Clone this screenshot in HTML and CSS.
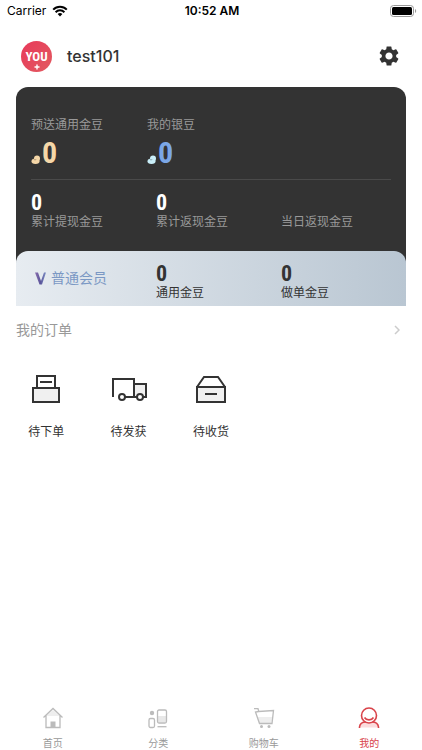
FILE: index.html
```html
<!DOCTYPE html>
<html lang="zh-CN">

<head>
    <meta charset="UTF-8">
    <meta name="viewport" content="width=device-width, initial-scale=1.0">
    <title>我的</title>
    <link rel="stylesheet" href="styles.css">
</head>

<body>
    <div class="status-bar">
        <div class="carrier">
            <span>Carrier</span>
            <svg width="16" height="12" viewBox="0 0 16 12" fill="none" stroke="#000" stroke-width="2">
                <path d="M1.2 4.6a9.6 9.6 0 0 1 13.6 0M3.6 7.2a6.2 6.2 0 0 1 8.8 0" />
                <path d="M5.6 9.1a3.4 3.4 0 0 1 4.8 0L8 11.5z" fill="#000" stroke="none" />
            </svg>
        </div>
        <span class="time">10:52 AM</span>
        <svg class="battery" width="27" height="12" viewBox="0 0 27 12">
            <rect x=".5" y=".5" width="23" height="11" rx="3" fill="#fff" stroke="#999" />
            <rect x="2" y="2" width="20" height="8" rx="1.5" fill="#000" />
            <path d="M25 4v4c1.6-.6 1.6-3.4 0-4z" fill="#999" />
        </svg>
    </div>

    <header class="profile">
        <div class="avatar">
            <span>YOU</span>
            <svg width="6" height="6" viewBox="0 0 6 6" stroke="#fff" stroke-width="1.4">
                <path d="M3 .5v5M.5 3h5" />
            </svg>
        </div>
        <h1>test101</h1>
        <button class="settings" aria-label="设置">
            <svg width="24" height="24" viewBox="0 0 24 24" fill="#333">
                <path d="M19.14 12.94c.04-.3.06-.61.06-.94s-.02-.64-.07-.94l2.03-1.58a.49.49 0 0 0 .12-.61l-1.92-3.32a.488.488 0 0 0-.59-.22l-2.39.96c-.5-.38-1.03-.7-1.62-.94l-.36-2.54a.484.484 0 0 0-.48-.41h-3.84c-.24 0-.43.17-.47.41l-.36 2.54c-.59.24-1.13.57-1.62.94l-2.39-.96c-.22-.08-.47 0-.59.22L2.74 8.87c-.12.21-.08.47.12.61l2.03 1.58c-.05.3-.09.63-.09.94s.02.64.07.94l-2.03 1.58a.49.49 0 0 0-.12.61l1.92 3.32c.12.22.37.29.59.22l2.39-.96c.5.38 1.03.7 1.62.94l.36 2.54c.05.24.24.41.48.41h3.84c.24 0 .44-.17.47-.41l.36-2.54c.59-.24 1.13-.56 1.62-.94l2.39.96c.22.08.47 0 .59-.22l1.92-3.32c.12-.22.07-.47-.12-.61l-2.01-1.58zM12 15.6c-1.98 0-3.6-1.62-3.6-3.6s1.62-3.6 3.6-3.6 3.6 1.62 3.6 3.6-1.62 3.6-3.6 3.6z" />
            </svg>
        </button>
    </header>

    <main>
        <section class="card">
            <div class="balances">
                <div class="balance gold">
                    <div class="label">预送通用金豆</div>
                    <div class="amount">
                        <svg width="10" height="10" viewBox="0 0 10 10">
                            <circle cx="6" cy="3.5" r="3" fill="#f5d7a8" />
                            <ellipse cx="4.5" cy="6.3" rx="4" ry="2.7" fill="#f5d7a8" />
                            <path d="M3 4.2c.4 1.200 1.600 1.200 2 0" fill="none" stroke="#8a7a60" stroke-width=".7" />
                        </svg>
                        <strong>0</strong>
                    </div>
                </div>
                <div class="balance silver">
                    <div class="label">我的银豆</div>
                    <div class="amount">
                        <svg width="10" height="10" viewBox="0 0 10 10">
                            <circle cx="6" cy="3.5" r="3" fill="#c9eef8" />
                            <ellipse cx="4.5" cy="6.3" rx="4" ry="2.7" fill="#c9eef8" />
                            <path d="M3 4.2c.4 1.200 1.600 1.200 2 0" fill="none" stroke="#66808a" stroke-width=".7" />
                        </svg>
                        <strong>0</strong>
                    </div>
                </div>
            </div>

            <div class="stats">
                <div class="stat">
                    <strong>0</strong>
                    <div class="label">累计提现金豆</div>
                </div>
                <div class="stat">
                    <strong>0</strong>
                    <div class="label">累计返现金豆</div>
                </div>
                <div class="stat">
                    <strong></strong>
                    <div class="label">当日返现金豆</div>
                </div>
            </div>

            <div class="member">
                <div class="level">
                    <svg width="12" height="13" viewBox="0 0 12 13">
                        <defs>
                            <linearGradient id="level" x1="0" y1="0" x2="1" y2="0">
                                <stop offset="0" stop-color="#8c6fae" />
                                <stop offset=".5" stop-color="#5a559b" />
                                <stop offset="1" stop-color="#7d8fc4" />
                            </linearGradient>
                        </defs>
                        <path d="M0 .5h3L6 9 9 .5h2L7 12.5H4.5z" fill="url(#level)" />
                    </svg>
                    <span>普通会员</span>
                </div>
                <div class="stat">
                    <strong>0</strong>
                    <div class="label">通用金豆</div>
                </div>
                <div class="stat">
                    <strong>0</strong>
                    <div class="label">做单金豆</div>
                </div>
            </div>
        </section>

        <section>
            <a href="#" class="orders-title">
                <span>我的订单</span>
                <svg width="6" height="10" viewBox="0 0 6 10" fill="none" stroke="#ccc" stroke-width="1.5">
                    <path d="M1 1l4 4-4 4" />
                </svg>
            </a>
            <div class="orders">
                <a href="#">
                    <svg width="40" height="32" viewBox="0 0 40 32" fill="none" stroke="#333" stroke-width="2">
                        <path d="M11 15V3h18v12" />
                        <path d="M14 9h12" />
                        <path d="M7 15h26v14H7z" fill="#f0f0f0" />
                    </svg>
                    <span>待下单</span>
                </a>
                <a href="#">
                    <svg width="40" height="32" viewBox="0 0 40 32" fill="none" stroke="#333" stroke-width="2">
                        <path d="M25 11h12v13H25z" fill="#f0f0f0" />
                        <path d="M4 24V6h21v18M12 24h20" />
                        <circle cx="13" cy="24" r="3" fill="#fff" />
                        <circle cx="31" cy="24" r="3" fill="#fff" />
                    </svg>
                    <span>待发获</span>
                </a>
                <a href="#">
                    <svg width="40" height="32" viewBox="0 0 40 32" fill="none" stroke="#333" stroke-width="2">
                        <path d="M6 14L13 4h14l7 10" />
                        <path d="M6 14h28v15H6z" fill="#f0f0f0" />
                        <path d="M14 21h12" />
                    </svg>
                    <span>待收货</span>
                </a>
            </div>
        </section>
    </main>

    <nav class="tabs">
        <a href="#">
            <svg width="24" height="24" viewBox="0 0 24 24" fill="none" stroke="#bbb" stroke-width="1.3">
                <path d="M5 10l7-6 7 6z" fill="#eee" stroke="none" />
                <path d="M2.5 11.5L12 2.5l9.5 9M5 9.5v12h14v-12" />
                <path d="M9.5 15.5h5v6h-5z" fill="#bbb" stroke="none" />
            </svg>
            <span>首页</span>
        </a>
        <a href="#">
            <svg width="24" height="24" viewBox="0 0 24 24" fill="none" stroke="#bbb" stroke-width="1.3">
                <path d="M12 10h8v6h-8z" fill="#e8e8e8" stroke="none" />
                <rect x="11.5" y="4" width="9" height="13" rx="1.5" />
                <rect x="3" y="12.5" width="5.5" height="9" rx="1.5" />
                <circle cx="6" cy="7" r="2.2" fill="#bbb" stroke="none" />
                <path d="M11.5 20.7h9" />
            </svg>
            <span>分类</span>
        </a>
        <a href="#">
            <svg width="24" height="24" viewBox="0 0 24 24" fill="none" stroke="#bbb" stroke-width="1.3">
                <path d="M5 11h15l-.5 6H7z" fill="#eee" stroke="none" />
                <path d="M2 2.7h4l.8 2.8L21.5 4.5 20 17.5H7.5L3.5 6l3.3-.5" />
                <circle cx="9.5" cy="20.5" r="1.5" fill="#bbb" stroke="none" />
                <circle cx="17" cy="20.5" r="1.5" fill="#bbb" stroke="none" />
            </svg>
            <span>购物车</span>
        </a>
        <a href="#" class="active">
            <svg width="24" height="24" viewBox="0 0 24 24" fill="none" stroke="#d9434a" stroke-width="1.6">
                <path d="M2.5 21.5c.2-3.2 2.5-5.3 6-5.5h7c3.500.2 5.8 2.3 6 5.5z" fill="#fbdcdd" stroke="none" />
                <path d="M2.5 22v-1c.3-3 3-5 6.5-5h6c3.5 0 6.2 2 6.5 5v1" />
                <circle cx="12" cy="9.5" r="7.5" fill="#fff" />
                <path d="M7.5 11.5c2 3.2 7 3.2 9 0" />
            </svg>
            <span>我的</span>
        </a>
    </nav>
</body>

</html>
```
FILE: styles.css
```css
* {
    box-sizing: border-box;
}

body {
    margin: 0;
    min-height: 100vh;
    display: flex;
    flex-direction: column;
    background-color: #fff;
    color: #333;
    font-family: Inter, "Noto Sans CJK SC", sans-serif;
    font-size: 12px;
    line-height: 20px;
}

a {
    color: inherit;
    text-decoration: none;
}

svg {
    display: block;
    flex-shrink: 0;
}

main {
    flex: 1;
}

.status-bar {
    display: grid;
    grid-template-columns: 1fr auto 1fr;
    align-items: center;
    height: 22px;
    padding: 0 5px 0 7px;
    color: #000;
}

.carrier {
    display: flex;
    align-items: center;
    gap: 6px;
}

.time {
    font-weight: 600;
}

.battery {
    justify-self: end;
}

.profile {
    display: flex;
    align-items: center;
    height: 65px;
    padding: 3px 21px 0;
}

.avatar {
    display: flex;
    flex-direction: column;
    align-items: center;
    width: 31px;
    height: 31px;
    padding-top: 9px;
    border-radius: 50%;
    background: linear-gradient(135deg, #e8395a, #e25a60);
    color: #fff;
}

.avatar span {
    font: bold 13px/14px "Roboto Condensed", Roboto, sans-serif;
}

h1 {
    flex: 1;
    margin: 0 0 0 15px;
    font-size: 16px;
    font-weight: 500;
    line-height: 24px;
}

.settings {
    padding: 0;
    border: none;
    background: none;
    cursor: pointer;
}

.card {
    margin: 0 16px;
    border-radius: 12px 12px 0 0;
    background-color: #333;
    color: #999;
}

strong {
    font-family: "Roboto Condensed", Roboto, sans-serif;
}

.balances {
    display: flex;
    gap: 44px;
    height: 93px;
    margin: 0 15px;
    padding-top: 28px;
    border-bottom: 1px solid #4a4a4a;
}

.amount {
    display: flex;
    align-items: flex-end;
    gap: 1px;
    margin-top: 4px;
}

.amount svg {
    margin-bottom: 2px;
}

.amount strong {
    font-size: 30px;
    line-height: 28px;
}

.gold strong {
    color: #f5d7a8;
}

.silver strong {
    color: #7ba7e6;
}

.stats,
.member {
    display: grid;
    grid-template-columns: repeat(3, 1fr);
    padding-left: 15px;
}

.stats {
    height: 71px;
    padding-top: 12px;
}

.stat strong {
    display: block;
    height: 20px;
    font-size: 22px;
    line-height: 22px;
}

.stats strong {
    color: #fff;
}

.member {
    height: 55px;
    padding-top: 12px;
    border-radius: 12px 12px 0 0;
    background: linear-gradient(90deg, #e7ecf1, #b9c6d2);
    color: #333;
}

.level {
    display: flex;
    align-items: center;
    gap: 4px;
    height: 30px;
    padding-left: 4px;
    color: #7b98c4;
    font-size: 14px;
}

.orders-title {
    display: flex;
    align-items: center;
    justify-content: space-between;
    height: 47px;
    padding: 0 22px 0 16px;
    color: #999;
    font-size: 14px;
}

.orders {
    display: grid;
    grid-template-columns: repeat(5, 1fr);
    padding: 20px 5px;
}

.orders a {
    display: flex;
    flex-direction: column;
    align-items: center;
    gap: 17px;
}

.tabs {
    display: grid;
    grid-template-columns: repeat(4, 1fr);
    height: 44px;
    color: #999;
    font-size: 10px;
}

.tabs a {
    display: flex;
    flex-direction: column;
    align-items: center;
    gap: 3px;
}

.tabs .active {
    color: #d9434a;
}
```
